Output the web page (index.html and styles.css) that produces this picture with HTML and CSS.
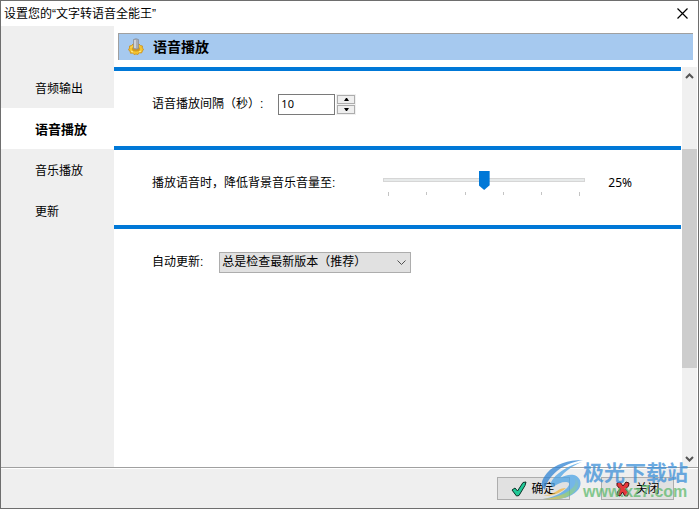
FILE: index.html
```
<!DOCTYPE html>
<html lang="zh-CN">
<head>
    <meta charset="UTF-8">
    <meta name="viewport" content="width=device-width, initial-scale=1.0">
    <title>设置您的“文字转语音全能王”</title>
    <link rel="stylesheet" href="styles.css">
</head>
<body>
    <div class="window">
        <header class="titlebar">
            <h1>设置您的“文字转语音全能王”</h1>
            <button class="close" type="button" aria-label="关闭窗口">
                <svg width="11" height="11" viewBox="0 0 11 11"><path d="M.5 .5l10 10M10.5 .5l-10 10" stroke="#000" stroke-width="1.2"/></svg>
            </button>
        </header>

        <div class="main">
            <nav class="sidebar">
                <a href="#output">音频输出</a>
                <a href="#voice" class="active">语音播放</a>
                <a href="#music">音乐播放</a>
                <a href="#update">更新</a>
            </nav>

            <main class="content">
                <div class="heading">
                    <svg width="16" height="18" viewBox="0 0 16 18">
                        <path d="M1.500 8l2-.5L5 6h6l1.500 1.500 2 .5-.3 2 1.300 1-1 2-1 2-2.500-.3L10 16.500l-2-.5-2 .5-1.500-1.500-2 .3L2 13 .5 12l1-2z" fill="#f4c430" stroke="#c98e1b" stroke-width=".8"/>
                        <ellipse cx="8" cy="11" rx="4" ry="2.500" fill="#d29a1c"/>
                        <path d="M3 13l2 1M11 14l2-1M3 9.500l1-1" stroke="#fff09a"/>
                        <path d="M5.500 1.500q2.500-1.500 5 0v9q-2.500 1.500-5 0z" fill="#a9adb5" stroke="#858a93" stroke-width=".7"/>
                        <path d="M7 2v8" stroke="#e3e6eb" stroke-width="1.300"/>
                    </svg>
                    <h2>语音播放</h2>
                </div>

                <div class="scroll-area">
                    <form class="panels">
                        <section class="panel">
                            <label for="interval">语音播放间隔（秒）:</label>
                            <div class="spinner">
                                <input type="text" id="interval" value="10">
                                <div class="spin-buttons">
                                    <button type="button" aria-label="增加"><svg width="5" height="3" viewBox="0 0 5 3"><path d="M0 3L2 0h1l2 3z"/></svg></button>
                                    <button type="button" aria-label="减少"><svg width="5" height="3" viewBox="0 0 5 3"><path d="M0 0h5L3 3H2z"/></svg></button>
                                </div>
                            </div>
                        </section>

                        <section class="panel">
                            <label for="volume" class="volume-label">播放语音时，降低背景音乐音量至:</label>
                            <div class="slider">
                                <input type="range" id="volume" min="0" max="50" value="25">
                                <div class="ticks"><i></i><i></i><i></i><i></i><i></i><i></i></div>
                            </div>
                            <output for="volume">25%</output>
                        </section>

                        <section class="panel">
                            <label for="auto-update">自动更新:</label>
                            <div class="dropdown">
                                <select id="auto-update">
                                    <option>总是检查最新版本（推荐）</option>
                                </select>
                                <svg width="9" height="5" viewBox="0 0 9 5"><path d="M.5 .5l4 4 4-4" fill="none" stroke="#505050"/></svg>
                            </div>
                        </section>
                    </form>

                    <div class="scrollbar">
                        <svg width="9" height="6" viewBox="0 0 9 6"><path d="M1 5l3.500-3.500L8 5" fill="none" stroke="#555" stroke-width="2"/></svg>
                        <div class="track"><div class="thumb"></div></div>
                        <svg width="9" height="6" viewBox="0 0 9 6"><path d="M1 1l3.500 3.500L8 1" fill="none" stroke="#555" stroke-width="2"/></svg>
                    </div>
                </div>
            </main>
        </div>

        <footer class="footer">
            <button type="button">
                <svg width="16" height="16" viewBox="0 0 16 16"><path d="M1 9l3-2 2.500 3L12 1.500 15 1l-1 3.500-6 10-2.500.5z" fill="#20c997" stroke="#0a3327" stroke-linejoin="round"/></svg>
                确定
            </button>
            <button type="button">
                <svg width="16" height="16" viewBox="0 0 16 16"><path d="M2 2l3-1 3 4 3-4 3 1-.5 3L10.500 8l3 4-1 3-3-.5L7.500 11 5 15l-3-1 .5-3L5 8 2 4.500z" fill="#e5383b" stroke="#4c1012" stroke-linejoin="round"/></svg>
                关闭
            </button>
        </footer>

        <div class="watermark">
            <svg width="44" height="41" viewBox="0 0 44 41">
                <defs>
                    <linearGradient id="tail" x1="1" y1="0" x2="0" y2="1">
                        <stop offset="0" stop-color="#4ba3e6"/>
                        <stop offset=".5" stop-color="#6cc27a"/>
                        <stop offset="1" stop-color="#f0b63c"/>
                    </linearGradient>
                </defs>
                <path d="M42 0C27 0 14 4 6 13c-6 7-7 13-2 17 1-7 5-13 12-19C23 5 32 2 42 0z" fill="#2f83d3"/>
                <path d="M41 2C29 5 18 11 12 19c-3 4-3 7 0 8 4-3 8-5 13-5 4 0 4 3 1 6-5 5-13 9-24 11 14 2 27-1 34-8 6-6 4-14-3-16-5-1-10 1-14 3 5-7 12-12 22-16z" fill="#4ba3e6"/>
                <path d="M32 17c4 3 3 9-3 13-7 5-16 8-27 9 14 2 27-1 33-9 4-6 3-11-3-13z" fill="url(#tail)"/>
                <path d="M2 36c9 0 18-3 23-8-3 0-7 1-9 3-3 2-8 4-14 5z" fill="#f0b63c"/>
            </svg>
            <div class="brand">
                <strong>极光下载站</strong>
                <span>www.xz7.com</span>
            </div>
        </div>
    </div>
</body>
</html>
```
FILE: styles.css
```
* {
    box-sizing: border-box;
}
body {
    margin: 0;
    font-family: "Liberation Sans", "Noto Sans CJK SC", sans-serif;
    font-size: 12px;
    line-height: 16px;
    color: #000;
}
h1, h2 {
    margin: 0;
    font-size: 12px;
}
button, input, select {
    font: inherit;
    color: inherit;
    margin: 0;
}
.window {
    position: relative;
    display: flex;
    flex-direction: column;
    min-height: 100vh;
    border: 1px solid #6e6e6e;
    background: #fff;
}
.titlebar {
    display: flex;
    align-items: center;
    justify-content: space-between;
    height: 25px;
    padding: 0 10px 0 3px;
}
.titlebar h1 {
    font-weight: normal;
}
.close {
    display: flex;
    padding: 0;
    border: none;
    background: none;
}

/* sidebar */
.main {
    display: flex;
    flex: 1;
}
.sidebar {
    width: 113px;
    padding-top: 41px;
    background: #efefef;
}
.sidebar a {
    display: block;
    height: 41px;
    padding: 2px 0 0 34px;
    line-height: 40px;
    color: #000;
    text-decoration: none;
}
.sidebar .active {
    background: #fff;
    font-size: 13px;
    font-weight: bold;
}

/* content */
.content {
    display: flex;
    flex: 1;
    flex-direction: column;
    padding-top: 7px;
}
.heading {
    display: flex;
    align-items: center;
    gap: 9px;
    height: 27px;
    margin: 0 5px 7px 4px;
    padding-left: 9px;
    border-top: 1px solid #a0a0a0;
    border-left: 1px solid #a0a0a0;
    background: #a6c9ef;
}
.heading h2 {
    font-size: 14px;
}
.scroll-area {
    display: flex;
    flex: 1;
    gap: 1px;
    padding-right: 1px;
}
.panels {
    flex: 1;
}
.panel {
    display: flex;
    align-items: center;
    height: 79px;
    padding: 0 49px 9px 38px;
    border-top: 4px solid #0078d7;
}
.spinner {
    display: flex;
    gap: 1px;
    margin-left: 15px;
}
.spinner input {
    width: 57px;
    height: 21px;
    padding: 0 2px 2px;
    border: 1px solid #7a7a7a;
    font-family: "Noto Sans", sans-serif;
    font-size: 11px;
}
.spin-buttons {
    display: flex;
    flex-direction: column;
    gap: 1px;
    padding: 1px;
    background: #f0f0f0;
}
.spin-buttons button {
    display: flex;
    align-items: center;
    justify-content: center;
    width: 18px;
    height: 9px;
    padding: 0;
    border: 1px solid #adadad;
    background: #efefef;
}
.volume-label {
    width: 231px;
}
.slider {
    flex: 1;
    max-width: 203px;
}
.slider input {
    display: block;
    width: 100%;
    height: 19px;
    appearance: none;
    background: none;
}
.slider input::-webkit-slider-runnable-track {
    height: 4px;
    border: 1px solid #d6d6d6;
    background: #e7eaea;
}
.slider input::-webkit-slider-thumb {
    appearance: none;
    width: 11px;
    height: 19px;
    margin-top: -8px;
    background: #0078d7;
    clip-path: polygon(0 0, 100% 0, 100% 75%, 50% 100%, 0 75%);
}
.ticks {
    display: flex;
    justify-content: space-between;
    margin: 2px 5px 0;
}
.ticks i {
    width: 1px;
    height: 3px;
    background: #c4c4c4;
}
.ticks i:first-child, .ticks i:last-child {
    height: 4px;
}
output {
    margin-left: 23px;
    font-family: "Noto Sans", sans-serif;
}
.dropdown {
    position: relative;
    margin-left: 16px;
}
.dropdown select {
    width: 192px;
    height: 21px;
    padding: 0 2px;
    border: 1px solid #adadad;
    border-radius: 0;
    appearance: none;
    background: #e1e1e1;
}
.dropdown svg {
    position: absolute;
    top: 8px;
    right: 5px;
    pointer-events: none;
}

/* scrollbar */
.scrollbar {
    display: flex;
    flex-direction: column;
    align-items: center;
    width: 15px;
    padding: 6px 0 5px;
    background: #f0f0f0;
}
.track {
    flex: 1;
    width: 100%;
    display: flex;
    flex-direction: column;
}
.track::before {
    content: "";
    flex: 4;
}
.track::after {
    content: "";
    flex: 5;
}
.thumb {
    height: 58%;
    background: #cdcdcd;
}

/* footer */
.footer {
    display: flex;
    justify-content: flex-end;
    gap: 31px;
    padding: 9px 24px 8px 0;
    border-top: 1px solid #a0a0a0;
    box-shadow: inset 0 1px #fff;
    background: #efefef;
}
.footer button {
    display: flex;
    align-items: center;
    justify-content: center;
    gap: 4px;
    width: 73px;
    height: 23px;
    padding: 0;
    border: 1px solid #adadad;
    background: #e1e1e1;
}

/* site watermark over the buttons */
.watermark {
    position: absolute;
    right: 10px;
    bottom: 7px;
    display: flex;
    opacity: 0.75;
    pointer-events: none;
}
.brand {
    display: flex;
    flex-direction: column;
    margin-left: -2px;
}
.brand strong {
    font-family: "Noto Sans CJK SC", sans-serif;
    font-size: 21px;
    font-weight: bold;
    line-height: 23px;
    color: #3c8fd8;
}
.brand span {
    font-size: 16px;
    font-weight: bold;
    line-height: 18px;
    color: #5fba6e;
}
```
